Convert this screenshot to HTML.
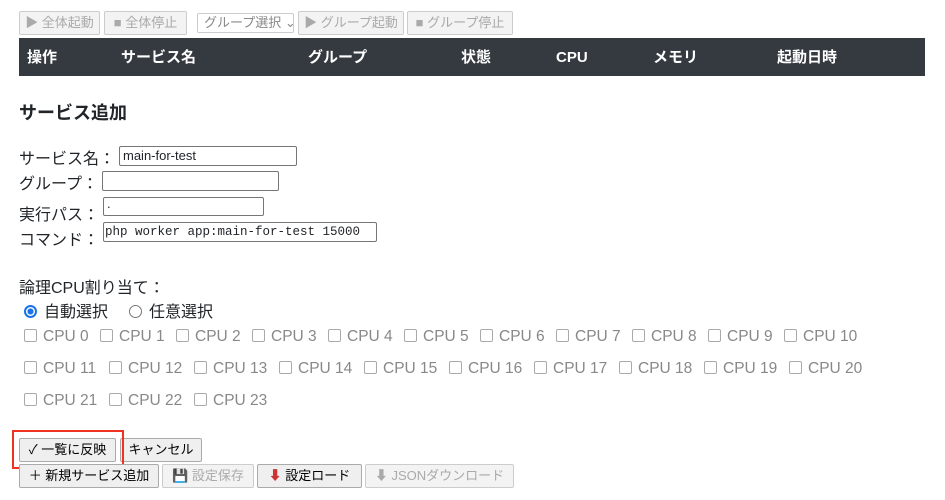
<!DOCTYPE html><html><head><meta charset="utf-8"><style>
body{margin:0;width:945px;height:500px;background:#fff;font-family:"Liberation Sans","Noto Sans CJK JP",sans-serif;position:relative;overflow:hidden;color:#212529}
.a{position:absolute;white-space:nowrap}
.btn{position:absolute;border:1px solid #aaa;border-radius:2px;background:#efefef;font-size:13px;line-height:22px;text-align:center;box-sizing:border-box;height:24px;white-space:nowrap}
.dis{color:#aaa;border-color:#ccc;background:#f3f3f3}
.hd{position:absolute;top:38px;left:19px;width:906px;height:38px;background:#343a40;color:#fff;font-weight:bold;font-size:15px}
.hd span{position:absolute;top:0;line-height:40px;height:38px}
.in{position:absolute;border:1px solid #767676;border-radius:2px;box-sizing:border-box;font-size:13px;padding-left:3px;line-height:17px}
.lb{position:absolute;font-size:16px;white-space:nowrap}
.cb{position:absolute;font-size:15.5px;color:#888;white-space:nowrap}
.cb i{display:inline-block;width:11px;height:11px;border:1px solid #aaa;border-radius:2px;margin-right:6px;vertical-align:-1px}
</style></head><body>
<div class="btn dis" style="left:19px;top:11px;width:81px">▶ 全体起動</div>
<div class="btn dis" style="left:104px;top:11px;width:83px">■ 全体停止</div>
<div class="btn dis" style="left:197px;top:13px;width:97px;height:20px;line-height:18px;background:#fff;color:#888;text-align:left;padding-left:6px">グループ選択 ⌄</div>
<div class="btn dis" style="left:298px;top:11px;width:106px">▶ グループ起動</div>
<div class="btn dis" style="left:407px;top:11px;width:106px">■ グループ停止</div>
<div class="hd"><span style="left:8px">操作</span><span style="left:102px">サービス名</span><span style="left:289px">グループ</span><span style="left:442px">状態</span><span style="left:537px">CPU</span><span style="left:634px">メモリ</span><span style="left:758px">起動日時</span></div>
<div class="a" style="left:19px;top:99px;font-size:18px;font-weight:bold">サービス追加</div>
<div class="lb" style="left:19px;top:145px">サービス名：</div>
<div class="in" style="left:119px;top:146px;width:178px;height:20px">main-for-test</div>
<div class="lb" style="left:19px;top:170px">グループ：</div>
<div class="in" style="left:102px;top:171px;width:177px;height:20px"></div>
<div class="lb" style="left:19px;top:201px">実行パス：</div>
<div class="in" style="left:103px;top:197px;width:161px;height:19px;line-height:12px">.</div>
<div class="lb" style="left:19px;top:226px">コマンド：</div>
<div class="in" style="left:103px;top:222px;width:274px;height:20px;font-family:'Liberation Mono','Noto Sans CJK JP',monospace;font-size:12.5px;line-height:18px;padding-left:1px">php worker app:main-for-test 15000</div>
<div class="lb" style="left:19px;top:274px">論理CPU割り当て：</div>
<div class="lb" style="left:24px;top:298px"><span style="display:inline-block;width:9px;height:9px;border:2px solid #1a73e8;border-radius:50%;background:radial-gradient(#1a73e8 45%,#fff 50%);vertical-align:-1px;margin-right:7px"></span>自動選択</div>
<div class="lb" style="left:129px;top:298px"><span style="display:inline-block;width:11px;height:11px;border:1px solid #777;border-radius:50%;vertical-align:-1px;margin-right:7px"></span>任意選択</div>
<div class="cb" style="left:24px;top:328px"><i></i>CPU 0</div>
<div class="cb" style="left:100px;top:328px"><i></i>CPU 1</div>
<div class="cb" style="left:176px;top:328px"><i></i>CPU 2</div>
<div class="cb" style="left:252px;top:328px"><i></i>CPU 3</div>
<div class="cb" style="left:328px;top:328px"><i></i>CPU 4</div>
<div class="cb" style="left:404px;top:328px"><i></i>CPU 5</div>
<div class="cb" style="left:480px;top:328px"><i></i>CPU 6</div>
<div class="cb" style="left:556px;top:328px"><i></i>CPU 7</div>
<div class="cb" style="left:632px;top:328px"><i></i>CPU 8</div>
<div class="cb" style="left:708px;top:328px"><i></i>CPU 9</div>
<div class="cb" style="left:784px;top:328px"><i></i>CPU 10</div>
<div class="cb" style="left:24px;top:360px"><i></i>CPU 11</div>
<div class="cb" style="left:109px;top:360px"><i></i>CPU 12</div>
<div class="cb" style="left:194px;top:360px"><i></i>CPU 13</div>
<div class="cb" style="left:279px;top:360px"><i></i>CPU 14</div>
<div class="cb" style="left:364px;top:360px"><i></i>CPU 15</div>
<div class="cb" style="left:449px;top:360px"><i></i>CPU 16</div>
<div class="cb" style="left:534px;top:360px"><i></i>CPU 17</div>
<div class="cb" style="left:619px;top:360px"><i></i>CPU 18</div>
<div class="cb" style="left:704px;top:360px"><i></i>CPU 19</div>
<div class="cb" style="left:789px;top:360px"><i></i>CPU 20</div>
<div class="cb" style="left:24px;top:392px"><i></i>CPU 21</div>
<div class="cb" style="left:109px;top:392px"><i></i>CPU 22</div>
<div class="cb" style="left:194px;top:392px"><i></i>CPU 23</div>
<div class="btn" style="left:19px;top:438px;width:97px;color:#000">✓ 一覧に反映</div>
<div class="btn" style="left:120px;top:438px;width:82px;color:#000">キャンセル</div>
<div class="a" style="left:12px;top:430px;width:108px;height:35px;border:2px solid #e32;"></div>
<div class="btn" style="left:19px;top:464px;width:140px;color:#000">＋ 新規サービス追加</div>
<div class="btn dis" style="left:162px;top:464px;width:92px">💾 設定保存</div>
<div class="btn" style="left:257px;top:464px;width:105px;color:#000"><span style="color:#c33">⬇</span> 設定ロード</div>
<div class="btn dis" style="left:365px;top:464px;width:149px">⬇ JSONダウンロード</div>
</body></html>
